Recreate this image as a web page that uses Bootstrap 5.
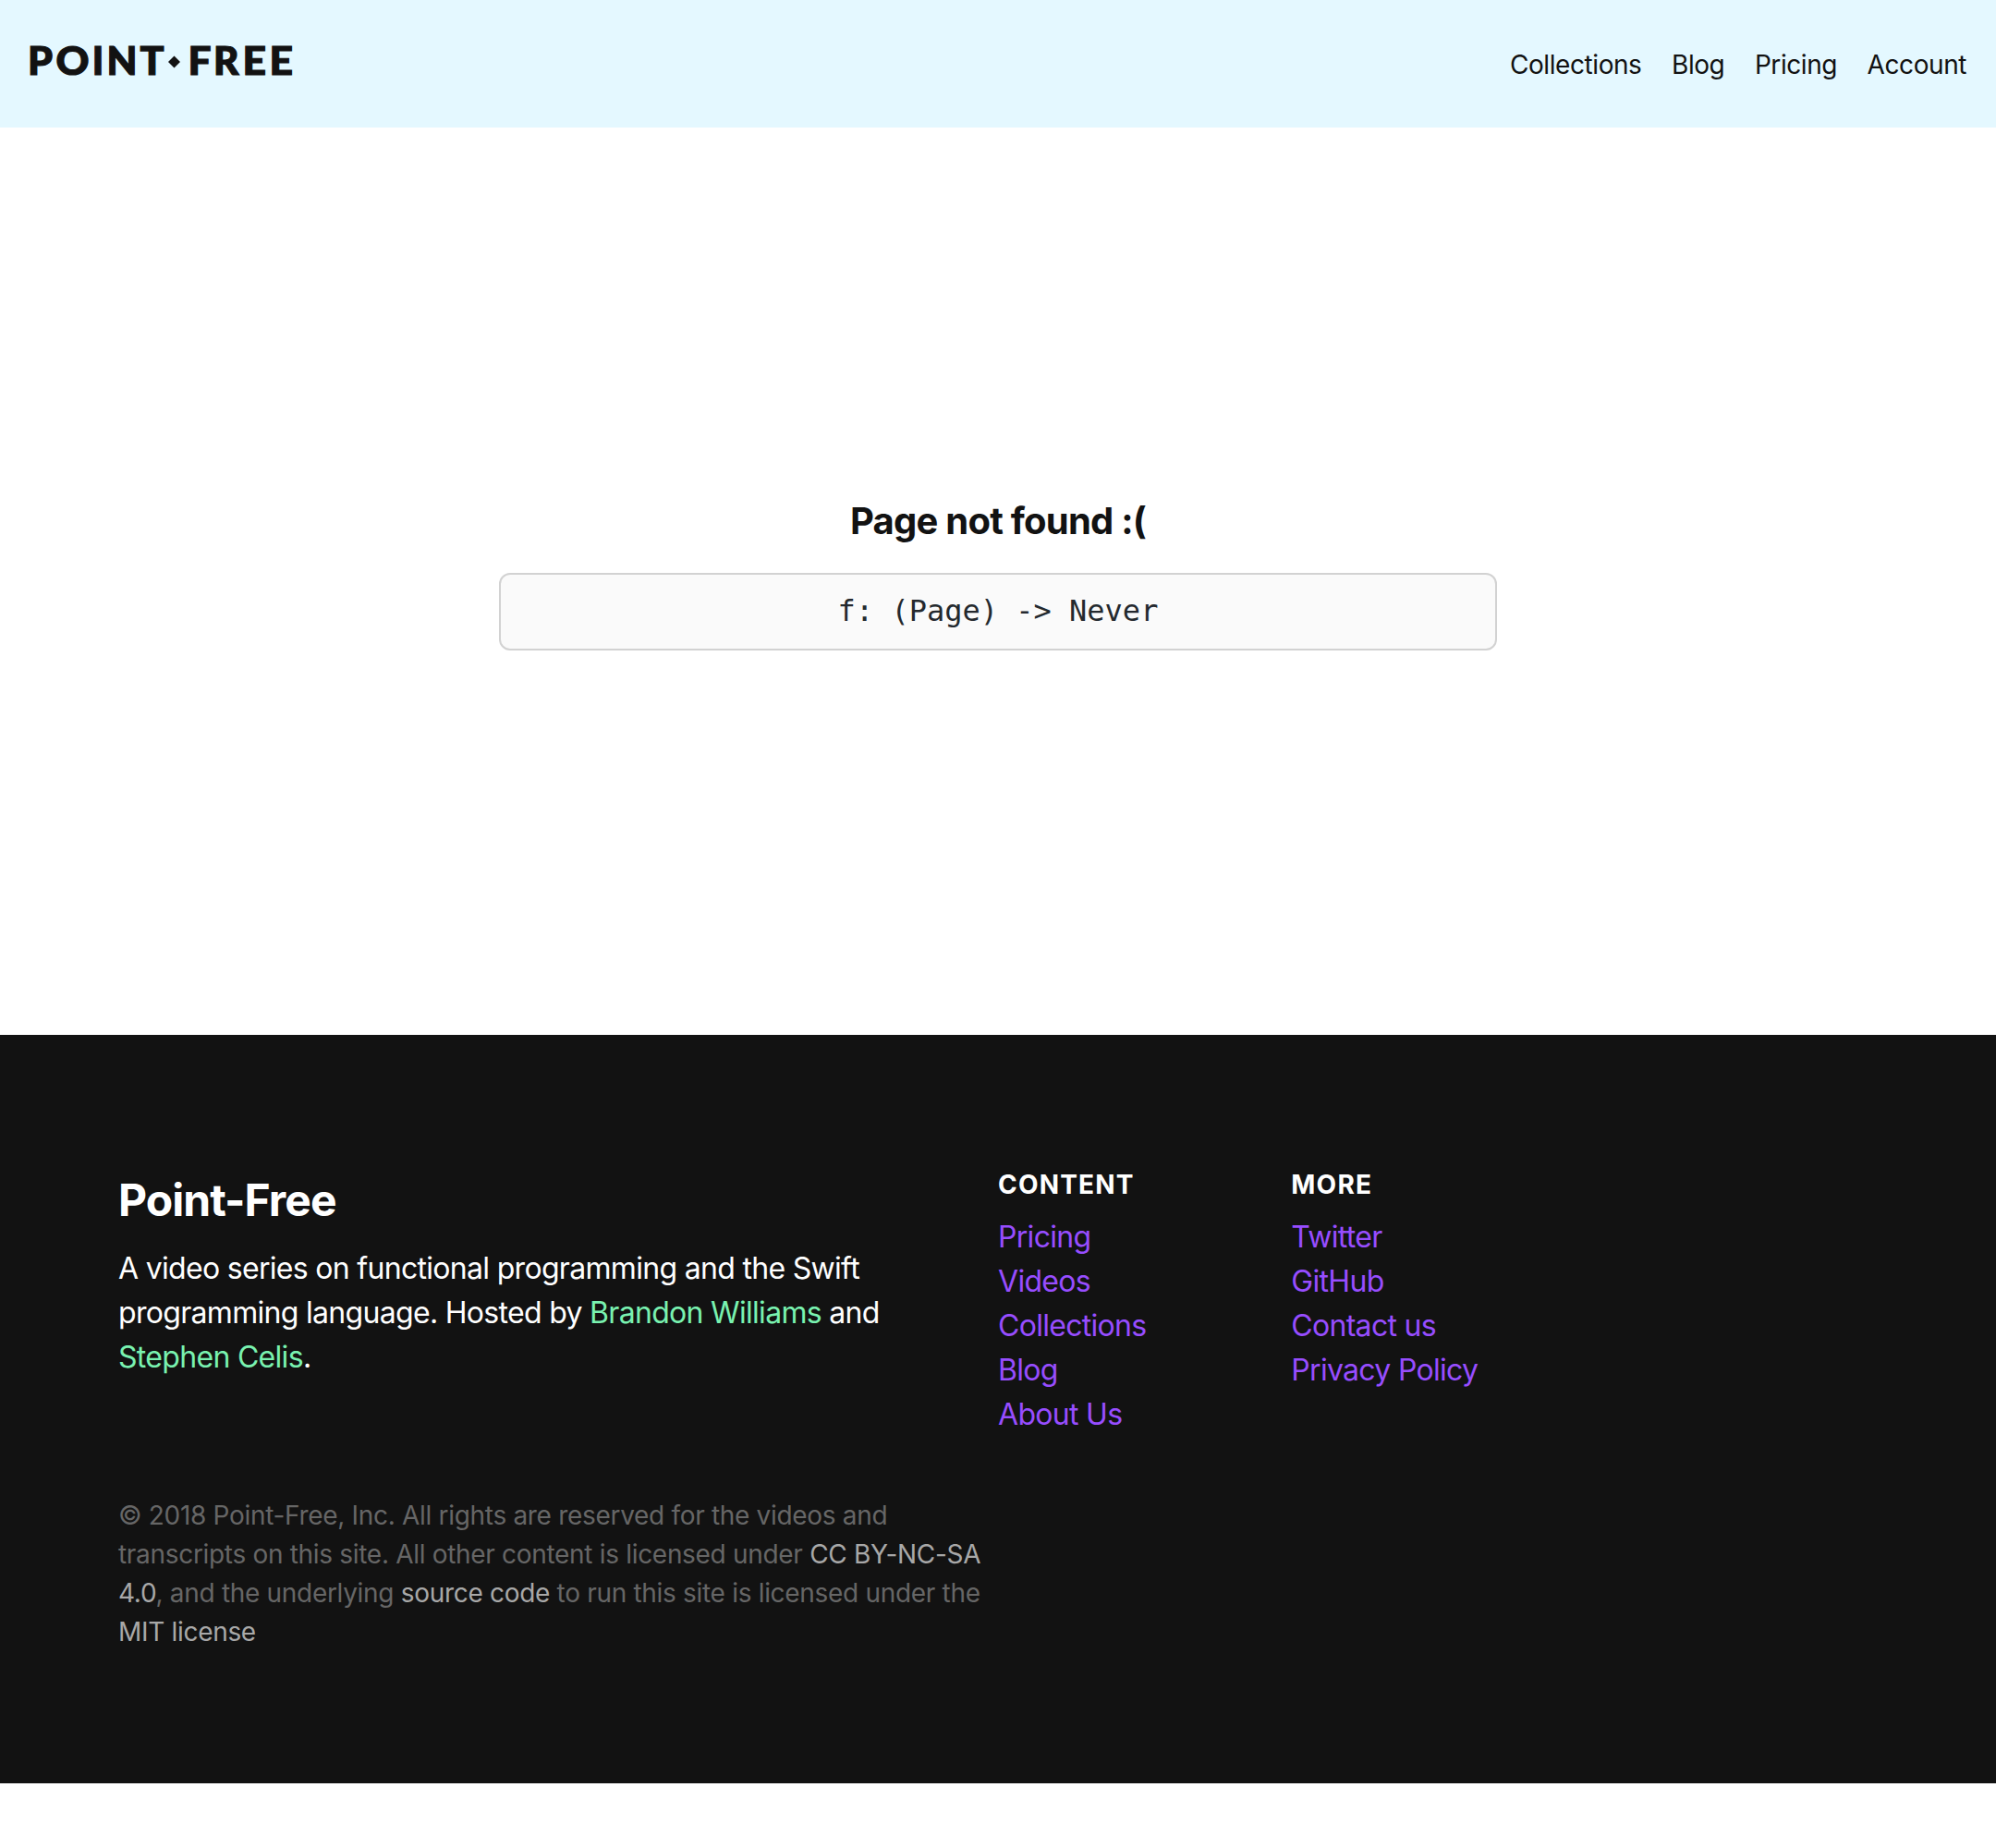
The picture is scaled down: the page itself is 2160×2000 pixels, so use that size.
<!DOCTYPE html>
<html lang="en">
<head>
<meta charset="utf-8">
<meta name="viewport" content="width=device-width, initial-scale=1">
<title>Page not found :(</title>
<link href="https://cdn.jsdelivr.net/npm/bootstrap@5.3.0/dist/css/bootstrap.min.css" rel="stylesheet">
<style>
  body { font-family: Inter, "Liberation Sans", sans-serif; font-size: 32px; line-height: 48px; color: #121212; background: #fff; }
  a { text-decoration: none; }
  .site-header { height: 138px; background: #e4f8ff; padding: 0 32px 0 22px; }
  .wordmark { margin-top: 32px; }
  .wordmark text { font-family: Lato, sans-serif; font-weight: 900; font-size: 41.5px; fill: #121212; stroke: #121212; stroke-width: 1.2px; }
  .top-links { margin-top: 49px; gap: 32.500px; font-size: 28px; line-height: 42px; letter-spacing: -.42px; }
  .top-links a { color: #121212; }
  .missing { height: 982px; padding-top: 401px; }
  .missing h3 { font-size: 40px; line-height: 50px; font-weight: 700; letter-spacing: -.78px; margin-bottom: 31px; }
  .snippet { width: 1080px; height: 84px; border: 2px solid #d2d2d2; border-radius: 12px; background: #fafafa; padding: 15px 0 17px; line-height: 48px; overflow: hidden; }
  .snippet code { font-family: "DejaVu Sans Mono", monospace; font-size: 32px; color: #24292e; }
  .site-footer { height: 810px; background: #121212; color: #fff; padding: 145px 128px 0; }
  .about { padding-top: 4px; letter-spacing: -.69px; }
  .about h4 { font-size: 48px; line-height: 60px; font-weight: 700; letter-spacing: -.95px; margin-bottom: 20px; }
  .about a { color: #79f2b0; }
  .group h5 { font-size: 28px; line-height: 35px; font-weight: 700; letter-spacing: 1.2px; margin-bottom: 15px; }
  .group { letter-spacing: -.7px; white-space: nowrap; }
  .group a { color: #974dff; }
  .legal { margin-top: 64px; font-size: 28px; line-height: 42px; color: #666; white-space: nowrap; letter-spacing: -.31px; }
  .legal a { color: #a8a8a8; }
</style>
</head>
<body>
<header class="site-header d-flex justify-content-between align-items-start">
  <a href="#" class="wordmark d-block lh-1" aria-label="Point-Free">
    <svg class="d-block" width="310" height="70" viewBox="-10 -16 310 70">
      <text x="-2" y="32.500" textLength="27" lengthAdjust="spacingAndGlyphs">P</text>
      <text x="28.500" y="32.500" textLength="36" lengthAdjust="spacingAndGlyphs">O</text>
      <text x="67.800" y="32.500" textLength="12.500" lengthAdjust="spacingAndGlyphs">I</text>
      <text x="83.500" y="32.500" textLength="33" lengthAdjust="spacingAndGlyphs">N</text>
      <text x="119.500" y="32.500" textLength="26" lengthAdjust="spacingAndGlyphs">T</text>
      <path d="M156.500 12.500 163 19l-6.500 6.500L150 19z" fill="#121212"/>
      <text x="171.500" y="32.500" textLength="25" lengthAdjust="spacingAndGlyphs">F</text>
      <text x="199" y="32.500" textLength="27.500" lengthAdjust="spacingAndGlyphs">R</text>
      <text x="230.500" y="32.500" textLength="25.500" lengthAdjust="spacingAndGlyphs">E</text>
      <text x="259.500" y="32.500" textLength="25.500" lengthAdjust="spacingAndGlyphs">E</text>
    </svg>
  </a>
  <nav class="top-links d-flex">
    <a href="#">Collections</a><a href="#">Blog</a><a href="#">Pricing</a><a href="#">Account</a>
  </nav>
</header>
<main class="missing d-flex flex-column align-items-center text-center">
  <h3>Page not found :(</h3>
  <pre class="snippet mb-0"><code>f: (Page) -&gt; Never</code></pre>
</main>
<footer class="site-footer">
  <div class="row g-0">
    <div class="col-6 about">
      <h4>Point-Free</h4>
      <p class="mb-0">A video series on functional programming and the Swift<br>programming language. Hosted by <a href="#">Brandon Williams</a> and<br><a href="#">Stephen Celis</a>.</p>
    </div>
    <div class="col-2 group">
      <h5>CONTENT</h5>
      <ul class="list-unstyled mb-0">
        <li><a href="#">Pricing</a></li>
        <li><a href="#">Videos</a></li>
        <li><a href="#">Collections</a></li>
        <li><a href="#">Blog</a></li>
        <li><a href="#">About Us</a></li>
      </ul>
    </div>
    <div class="col-2 group">
      <h5>MORE</h5>
      <ul class="list-unstyled mb-0">
        <li><a href="#">Twitter</a></li>
        <li><a href="#">GitHub</a></li>
        <li><a href="#">Contact us</a></li>
        <li><a href="#">Privacy Policy</a></li>
      </ul>
    </div>
  </div>
  <div class="row g-0">
    <p class="col-6 legal mb-0">© 2018 Point-Free, Inc. All rights are reserved for the videos and<br>transcripts on this site. All other content is licensed under <a href="#">CC BY-NC-SA<br>4.0</a>, and the underlying <a href="#">source code</a> to run this site is licensed under the<br><a href="#">MIT license</a></p>
  </div>
</footer>
<script src="https://cdn.jsdelivr.net/npm/bootstrap@5.3.0/dist/js/bootstrap.bundle.min.js"></script>
</body>
</html>
